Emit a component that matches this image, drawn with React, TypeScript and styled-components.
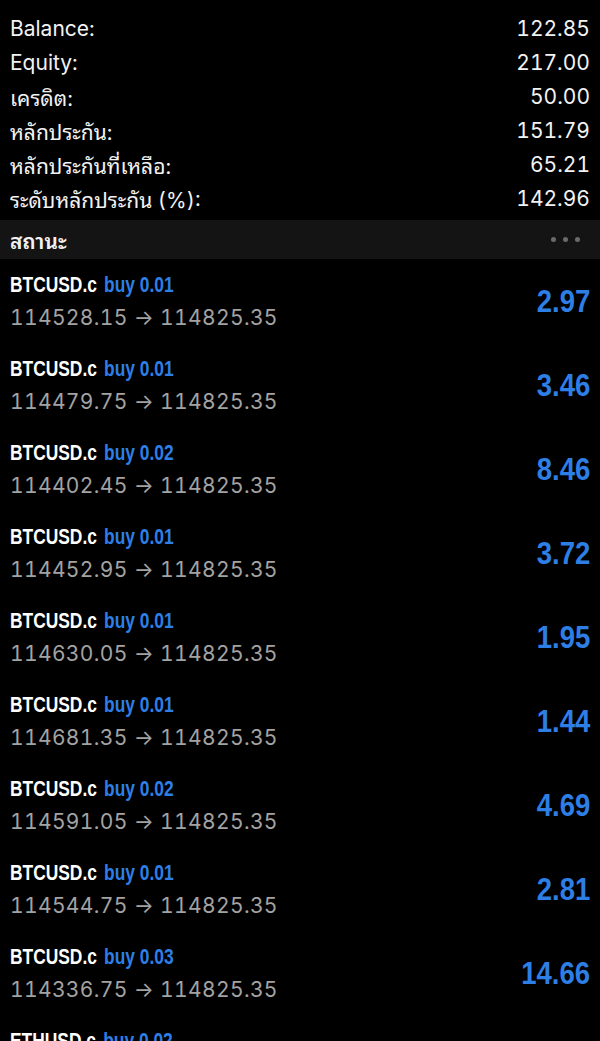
import React from "react";
import styled, { createGlobalStyle } from "styled-components";

const GlobalStyle = createGlobalStyle`
  html, body {
    margin: 0;
    padding: 0;
    background: #000;
  }
  body {
    font-family: Inter, "Noto Sans Thai Looped", "Noto Sans Thai", "Noto Sans", sans-serif;
    font-feature-settings: "tnum";
    color: #f2f2f2;
  }
`;

const Page = styled.div`
  width: 600px;
  height: 1041px;
  background: #000;
  overflow: hidden;
`;

const Summary = styled.div`
  padding: 11px 10px 5px;
`;

const SummaryRow = styled.div`
  display: flex;
  justify-content: space-between;
  align-items: center;
  height: 34px;
  font-size: 21px;
  color: #f2f2f2;
`;

const SectionHeader = styled.div`
  display: flex;
  justify-content: space-between;
  align-items: center;
  height: 39px;
  padding: 0 10px;
  background: #141414;
  font-size: 21px;
  font-weight: 600;
`;

const Dots = styled.div`
  display: flex;
  gap: 7px;
  padding-right: 10px;
`;

const Dot = styled.span`
  width: 5px;
  height: 5px;
  border-radius: 50%;
  background: #6a6a6a;
`;

const Position = styled.div`
  display: flex;
  justify-content: space-between;
  align-items: center;
  height: 84px;
  padding: 0 10px;
  box-sizing: border-box;
`;

const Info = styled.div`
  align-self: flex-start;
  display: flex;
  flex-direction: column;
  padding-top: 11px;
`;

// condensed look: no narrow face installed, so squeeze Liberation Sans Bold
const SymbolLine = styled.div`
  font-family: "Liberation Sans", Arial, sans-serif;
  font-size: 22px;
  font-weight: 700;
  line-height: 30px;
  color: #fff;
  white-space: nowrap;
  transform: scaleX(0.79);
  transform-origin: left center;
`;

const Side = styled.span`
  color: #2d7fe6;
  margin-left: 3px;
`;

const Prices = styled.div`
  font-size: 21px;
  line-height: 36px;
  letter-spacing: 0.35px;
  color: #a3a3a3;
  white-space: nowrap;
`;

const Profit = styled.div`
  font-family: "Liberation Sans", Arial, sans-serif;
  font-size: 32px;
  font-weight: 700;
  color: #2d7fe6;
  transform: scaleX(0.86);
  transform-origin: right center;
`;

const summary = [
  ["Balance:", "122.85"],
  ["Equity:", "217.00"],
  ["เครดิต:", "50.00"],
  ["หลักประกัน:", "151.79"],
  ["หลักประกันที่เหลือ:", "65.21"],
  ["ระดับหลักประกัน (%):", "142.96"],
];

const positions = [
  { symbol: "BTCUSD.c", volume: "0.01", open: "114528.15", current: "114825.35", profit: "2.97" },
  { symbol: "BTCUSD.c", volume: "0.01", open: "114479.75", current: "114825.35", profit: "3.46" },
  { symbol: "BTCUSD.c", volume: "0.02", open: "114402.45", current: "114825.35", profit: "8.46" },
  { symbol: "BTCUSD.c", volume: "0.01", open: "114452.95", current: "114825.35", profit: "3.72" },
  { symbol: "BTCUSD.c", volume: "0.01", open: "114630.05", current: "114825.35", profit: "1.95" },
  { symbol: "BTCUSD.c", volume: "0.01", open: "114681.35", current: "114825.35", profit: "1.44" },
  { symbol: "BTCUSD.c", volume: "0.02", open: "114591.05", current: "114825.35", profit: "4.69" },
  { symbol: "BTCUSD.c", volume: "0.01", open: "114544.75", current: "114825.35", profit: "2.81" },
  { symbol: "BTCUSD.c", volume: "0.03", open: "114336.75", current: "114825.35", profit: "14.66" },
];

const App: React.FC = () => {
  return (
    <Page>
      <GlobalStyle />
      <Summary>
        {summary.map(([label, value]) => (
          <SummaryRow key={label}>
            <span>{label}</span>
            <span>{value}</span>
          </SummaryRow>
        ))}
      </Summary>

      <SectionHeader>
        <span>สถานะ</span>
        <Dots>
          <Dot />
          <Dot />
          <Dot />
        </Dots>
      </SectionHeader>

      {positions.map((p, i) => (
        <Position key={i}>
          <Info>
            <SymbolLine>
              {p.symbol} <Side>buy {p.volume}</Side>
            </SymbolLine>
            <Prices>
              {p.open} → {p.current}
            </Prices>
          </Info>
          <Profit>{p.profit}</Profit>
        </Position>
      ))}

      {/* last row only peeks in at the bottom edge */}
      <Position>
        <Info>
          <SymbolLine>
            ETHUSD.c <Side>buy 0.02</Side>
          </SymbolLine>
        </Info>
      </Position>
    </Page>
  );
};

export default App;
